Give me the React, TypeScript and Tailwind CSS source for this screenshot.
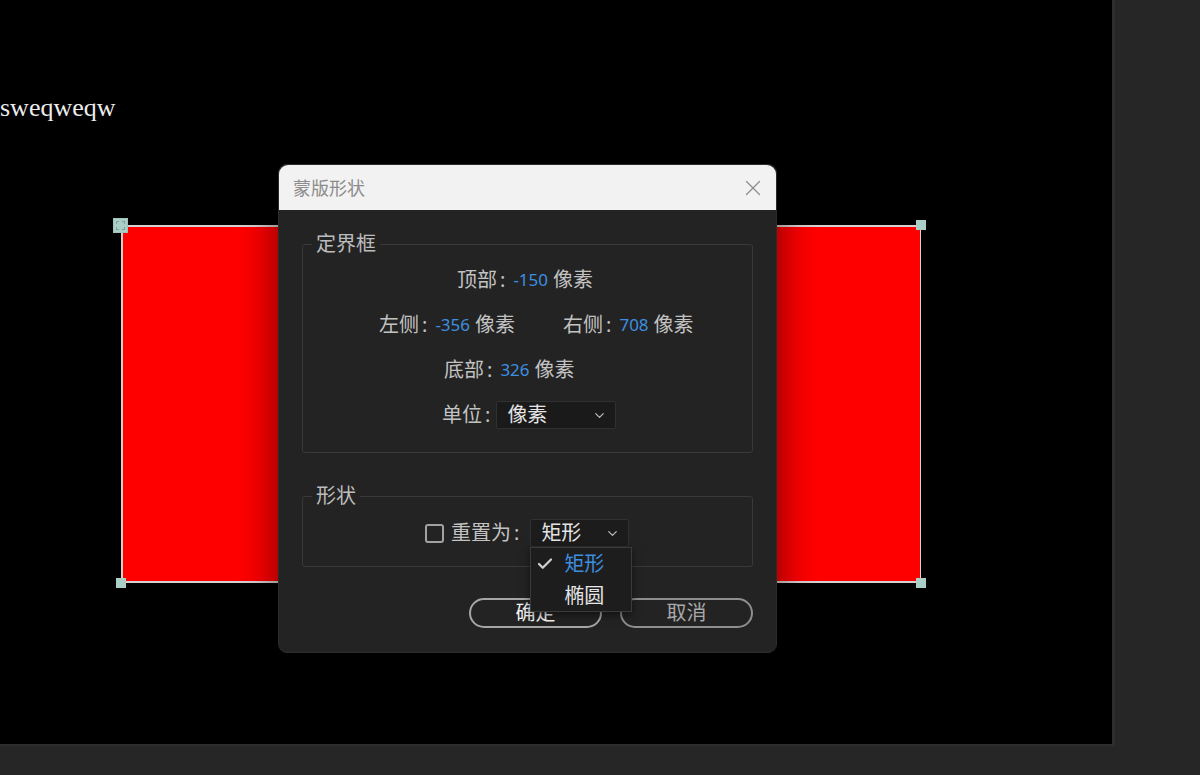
import { Check, ChevronDown, X } from "lucide-react";

function Handle({ className }: { className: string }) {
  return <div className={`absolute bg-[#a9cfc7] ${className}`} />;
}

function Field({ label, value, className = "" }: { label: string; value: string; className?: string }) {
  return (
    <div className={`flex items-center ${className}`}>
      <span>{label}</span>
      <span className="ml-[3px] mr-[8px]">:</span>
      <span className="text-[17px] text-[#3d8fe0]">{value}</span>
      <span className="ml-[5px]">像素</span>
    </div>
  );
}

export default function App() {
  return (
    <div className="flex h-[775px] w-[1200px] items-start overflow-hidden bg-[#262626]">
      {/* canvas */}
      <div className="relative h-[746px] w-[1115px] shrink-0 border-b-[2px] border-r-[3px] border-[#2e2e2e] bg-black">
        <div className="absolute left-0 top-[95px] font-['Liberation_Serif',serif] text-[26px] leading-none text-[#ececec]">
          sweqweqw
        </div>

        {/* layer rect */}
        <div className="absolute left-[121px] top-[225px] h-[358px] w-[800px] border-l-2 border-t-2 border-r border-b-2 border-[#dccfcf] bg-[#ff0000]" />
        <div className="absolute left-[113px] top-[218px] h-[15px] w-[15px] border border-[#9fc4bd] bg-[#a9cfc7]">
          <div className="m-[2px] h-[9px] w-[9px] border border-dashed border-[#7fa39c]" />
        </div>
        <Handle className="left-[916px] top-[220px] h-[10px] w-[10px]" />
        <Handle className="left-[116px] top-[578px] h-[10px] w-[10px]" />
        <Handle className="left-[916px] top-[578px] h-[10px] w-[10px]" />

        {/* dialog */}
        <div className="absolute left-[278px] top-[164px] flex w-[499px] flex-col rounded-[9px] border border-[#2c2c2c] bg-[#232323] font-['Noto_Sans','Noto_Sans_CJK_SC',sans-serif] text-[20px] leading-none text-[#c2c2c2] shadow-[0_0_40px_rgba(0,0,0,0.55)]">
          <div className="flex h-[45px] items-center justify-between rounded-t-[9px] bg-[#f2f2f2] pl-[14px] pr-[10px]">
            <span className="text-[18px] text-[#8c8c8c]">蒙版形状</span>
            <X className="h-[26px] w-[26px] text-[#8e8e8e]" strokeWidth={1.2} />
          </div>

          <div className="flex flex-col px-[23px] pb-[24px] pt-[21px]">
            <fieldset className="rounded-[3px] border border-[#393939] px-0 pb-[14px]">
              <legend className="ml-[9px] px-[4px] py-[3px] text-[#bcbcbc]">定界框</legend>
              <div className="flex h-[45px] items-center pl-[154px]">
                <Field label="顶部" value="-150" />
              </div>
              <div className="flex h-[45px] items-center pl-[76px]">
                <Field label="左侧" value="-356" />
                <Field label="右侧" value="708" className="ml-[48px]" />
              </div>
              <div className="flex h-[45px] items-center pl-[141px]">
                <Field label="底部" value="326" />
              </div>
              <div className="flex h-[46px] items-center pl-[139px]">
                <span>单位</span>
                <span className="ml-[3px] mr-[6px]">:</span>
                <div className="flex h-[28px] w-[120px] items-center justify-between rounded-[2px] border border-[#303030] bg-[#1a1a1a] pl-[10px] pr-[8px] text-[#e4e4e4]">
                  <span>像素</span>
                  <ChevronDown className="h-[15px] w-[15px] text-[#bbbbbb]" strokeWidth={2} />
                </div>
              </div>
            </fieldset>

            <fieldset className="mt-[30px] rounded-[3px] border border-[#393939] pb-[19px]">
              <legend className="ml-[9px] px-[4px] py-[3px] text-[#bcbcbc]">形状</legend>
              <div className="flex items-center pl-[122px] pt-[10px]">
                <div className="h-[19px] w-[19px] rounded-[3px] border-2 border-[#a2a2a2]" />
                <span className="ml-[7px]">重置为</span>
                <span className="ml-[3px] mr-[11px]">:</span>
                <div className="relative">
                  <div className="flex h-[28px] w-[99px] items-center justify-between rounded-[2px] border border-[#303030] bg-[#1c1c1c] pl-[10px] pr-[8px] text-[#e4e4e4]">
                    <span>矩形</span>
                    <ChevronDown className="h-[15px] w-[15px] text-[#bbbbbb]" strokeWidth={2} />
                  </div>
                  <div className="absolute left-0 top-full z-10 flex h-[65px] w-[102px] flex-col justify-center gap-[12px] border border-[#3a3a3a] bg-[#1d1d1d] shadow-[0_3px_8px_rgba(0,0,0,0.5)]">
                    <div className="flex items-center pl-[5px] text-[#3d8fe0]">
                      <Check className="h-[18px] w-[18px] text-[#d0d0d0]" strokeWidth={3} />
                      <span className="ml-[10px]">矩形</span>
                    </div>
                    <div className="flex items-center pl-[33px] text-[#e6e6e6]">椭圆</div>
                  </div>
                </div>
              </div>
            </fieldset>

            <div className="mt-[31px] flex justify-end gap-[18px]">
              <button className="flex h-[30px] w-[133px] items-center justify-center rounded-full border-2 border-[#a6a6a6] text-[#f2f2f2]">
                确定
              </button>
              <button className="flex h-[30px] w-[133px] items-center justify-center rounded-full border-2 border-[#8e8e8e] text-[#a9a9a9]">
                取消
              </button>
            </div>
          </div>
        </div>
      </div>
    </div>
  );
}
